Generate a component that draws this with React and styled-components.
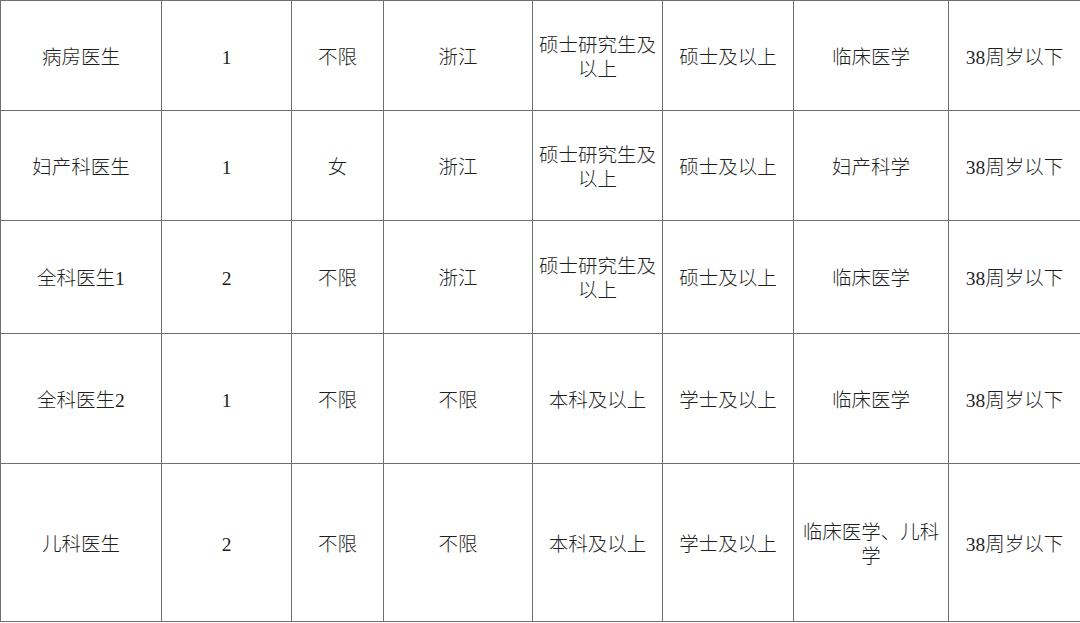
import React from 'react';
import styled, { createGlobalStyle } from 'styled-components';

const GlobalStyle = createGlobalStyle`
  html, body {
    margin: 0;
    padding: 0;
    background: #ffffff;
    overflow: hidden;
  }
`;

const columns = [161, 130, 92, 149, 130, 131, 155, 132];
const rowHeights = [110, 110, 113, 130, 158];

const rows = [
  ['病房医生', '1', '不限', '浙江', '硕士研究生及以上', '硕士及以上', '临床医学', '38周岁以下'],
  ['妇产科医生', '1', '女', '浙江', '硕士研究生及以上', '硕士及以上', '妇产科学', '38周岁以下'],
  ['全科医生1', '2', '不限', '浙江', '硕士研究生及以上', '硕士及以上', '临床医学', '38周岁以下'],
  ['全科医生2', '1', '不限', '不限', '本科及以上', '学士及以上', '临床医学', '38周岁以下'],
  ['儿科医生', '2', '不限', '不限', '本科及以上', '学士及以上', '临床医学、儿科学', '38周岁以下'],
];

const Table = styled.table`
  width: 1080px;
  border-collapse: collapse;
  table-layout: fixed;
  font-family: "Liberation Serif", "Noto Sans CJK SC", serif;
  font-size: 19.5px;
  color: #1e1e1e;
`;

const Row = styled.tr`
  height: ${({ h }) => h}px;
`;

const Cell = styled.td`
  border: 1.5px solid #6e6e6e;
  text-align: center;
  vertical-align: middle;
  padding: 4px 2px 0;
  line-height: 24px;
  font-weight: 300;
  word-break: break-all;
`;

export default function App() {
  return (
    <>
      <GlobalStyle />
      <Table>
        <colgroup>
          {columns.map((w, i) => (
            <col key={i} style={{ width: w }} />
          ))}
        </colgroup>
        <tbody>
          {rows.map((r, i) => (
            <Row key={i} h={rowHeights[i]}>
              {r.map((c, j) => (
                <Cell key={j}>{c}</Cell>
              ))}
            </Row>
          ))}
        </tbody>
      </Table>
    </>
  );
}
